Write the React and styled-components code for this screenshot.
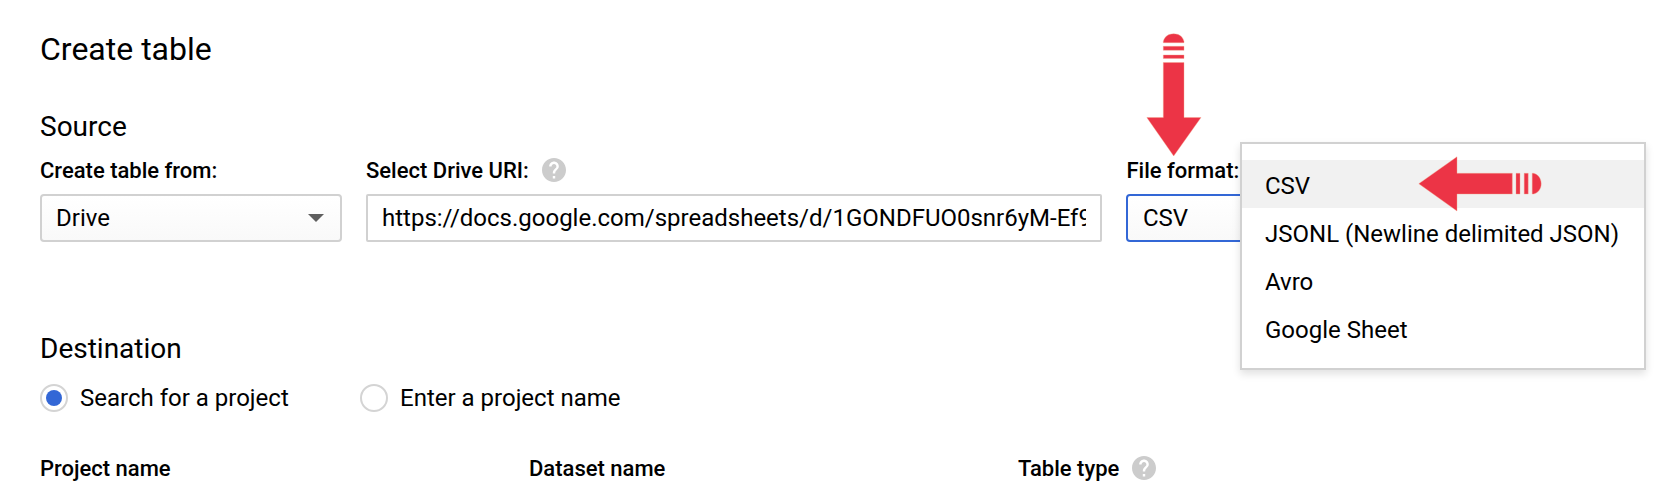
import React from 'react';
import styled, { createGlobalStyle } from 'styled-components';

const GlobalStyle = createGlobalStyle`
  * { box-sizing: border-box; }
  body {
    margin: 0;
    background: #fff;
    color: #000;
    font-family: Roboto, "Liberation Sans", sans-serif;
    overflow: hidden;
  }
`;

const Page = styled.main`
  position: relative;
  height: 484px;
  padding: 30px 20px 0 40px;
  overflow: hidden;
`;

const Title = styled.h1`
  margin: 0;
  font-size: 32px;
  font-weight: 400;
  line-height: 38px;
`;

const Section = styled.section`
  margin-top: ${(p) => p.$gap}px;
`;

const SectionTitle = styled.h2`
  margin: 0;
  font-size: 28px;
  font-weight: 400;
  line-height: 32px;
`;

const SourceRow = styled.div`
  display: grid;
  grid-template-columns: 302px 736px 300px;
  column-gap: 24px;
  margin-top: 13px;
`;

const Field = styled.div`
  display: flex;
  flex-direction: column;
  gap: 10px;
  min-width: 0;
`;

const Label = styled.div`
  display: flex;
  align-items: center;
  gap: 13px;
  height: 28px;
  padding-left: ${(p) => p.$inset || 0}px;
  font-size: 22px;
  font-weight: 500;
  line-height: 26px;
  white-space: nowrap;
`;

const LabelText = styled.span`
  padding-top: 2px;
`;

const Select = styled.div`
  display: flex;
  align-items: center;
  justify-content: space-between;
  height: 48px;
  padding: 0 16px 0 ${(p) => (p.$focused ? 15 : 14)}px;
  border: 2px solid ${(p) => (p.$focused ? '#3367d6' : '#d1d1d1')};
  border-radius: 4px;
  background: linear-gradient(#fff, #f9f9f9);
  font-size: 24px;
`;

const Caret = styled.span`
  border: 8px solid transparent;
  border-top-color: #5f5f5f;
  border-bottom: 0;
`;

const TextInput = styled.div`
  display: flex;
  align-items: center;
  height: 48px;
  padding: 0 14px;
  border: 2px solid #d1d1d1;
  border-radius: 2px;
  font-size: 24px;
`;

const InputText = styled.span`
  flex: 1;
  overflow: hidden;
  white-space: nowrap;
  line-height: 32px;
`;

const Radios = styled.div`
  display: flex;
  margin-top: 19px;
`;

const Radio = styled.label`
  display: flex;
  align-items: center;
  gap: 12px;
  width: 320px;
  height: 28px;
  font-size: 24px;
  white-space: nowrap;
`;

const RadioDot = styled.span`
  display: flex;
  align-items: center;
  justify-content: center;
  width: 28px;
  height: 28px;
  border: 2px solid #d4d4d4;
  border-radius: 50%;

  &::after {
    content: '';
    width: 16px;
    height: 16px;
    border-radius: 50%;
    background: ${(p) => (p.$checked ? '#3367d6' : 'transparent')};
  }
`;

const Columns = styled.div`
  display: grid;
  grid-template-columns: repeat(3, 489px);
  margin-top: 42px;
`;

const Menu = styled.ul`
  position: absolute;
  top: 142px;
  left: 1240px;
  width: 406px;
  height: 228px;
  margin: 0;
  padding: 16px 0;
  list-style: none;
  background: #fff;
  border: 2px solid #d1d1d1;
  box-shadow: 0 4px 8px rgba(0, 0, 0, 0.12);
`;

const MenuItem = styled.li`
  height: 48px;
  padding: 4px 23px 0;
  font-size: 24px;
  line-height: 44px;
  white-space: nowrap;
  background: ${(p) => (p.$active ? '#f1f1f1' : 'transparent')};
`;

const Pointer = styled.svg`
  position: absolute;
  top: ${(p) => p.$top}px;
  left: ${(p) => p.$left}px;
  fill: #ec3446;
  stroke: #f5a58c;
  stroke-width: 0.4;
`;

const HelpIcon = () => (
  <svg width="24" height="24" viewBox="2 2 20 20" fill="#ccc">
    <path d="M12 2C6.48 2 2 6.48 2 12s4.48 10 10 10 10-4.48 10-10S17.52 2 12 2zm1 17h-2v-2h2v2zm2.07-7.75l-.9.92C13.45 12.9 13 13.5 13 15h-2v-.5c0-1.1.45-2.1 1.17-2.83l1.24-1.26c.37-.36.59-.86.59-1.41 0-1.1-.9-2-2-2s-2 .9-2 2H8c0-2.21 1.79-4 4-4s4 1.790 4 4c0 .88-.36 1.68-.93 2.250z" />
  </svg>
);

const menuItems = ['CSV', 'JSONL (Newline delimited JSON)', 'Avro', 'Google Sheet'];

export default function App() {
  return (
    <Page>
      <GlobalStyle />
      <Title>Create table</Title>

      <Section $gap={43}>
        <SectionTitle>Source</SectionTitle>
        <SourceRow>
          <Field>
            <Label><LabelText>Create table from:</LabelText></Label>
            <Select>Drive<Caret /></Select>
          </Field>
          <Field>
            <Label><LabelText>Select Drive URI:</LabelText><HelpIcon /></Label>
            <TextInput>
              <InputText>https://docs.google.com/spreadsheets/d/1GONDFUO0snr6yM-Ef9</InputText>
            </TextInput>
          </Field>
          <Field>
            <Label $inset={0.5}><LabelText>File format:</LabelText></Label>
            <Select $focused>CSV</Select>
          </Field>
        </SourceRow>
      </Section>

      <Section $gap={91}>
        <SectionTitle>Destination</SectionTitle>
        <Radios>
          <Radio><RadioDot $checked />Search for a project</Radio>
          <Radio><RadioDot />Enter a project name</Radio>
        </Radios>
        <Columns>
          <Label><LabelText>Project name</LabelText></Label>
          <Label><LabelText>Dataset name</LabelText></Label>
          <Label><LabelText>Table type</LabelText><HelpIcon /></Label>
        </Columns>
      </Section>

      <Menu>
        {menuItems.map((item, i) => (
          <MenuItem key={item} $active={i === 0}>{item}</MenuItem>
        ))}
      </Menu>

      <Pointer $top={33} $left={1146} width="56" height="124" viewBox="0 0 56 124">
        <path d="M17.3 9.7V8.5C18.5 3.5 22.5.8 27.7.8S36.9 3.5 38 8.5v1.2zM17.3 13.3h20.7v4H17.3zM17.3 22h20.7v3.4H17.3zM17.3 29.5h20.7v55h17L27.7 123 .8 84.5h16.5z" />
      </Pointer>
      <Pointer $top={156} $left={1418} width="124" height="56" viewBox="0 0 124 56">
        <path d="M.8 27.7 39 .8v16.5h55.3V38H39v17zM98 17.3h4V38h-4zM106.2 17.3h4V38h-4zM114.2 17.3h1.3c4.500 1 7.700 5 7.700 10.400S120 37 115.500 38h-1.300z" />
      </Pointer>
    </Page>
  );
}
